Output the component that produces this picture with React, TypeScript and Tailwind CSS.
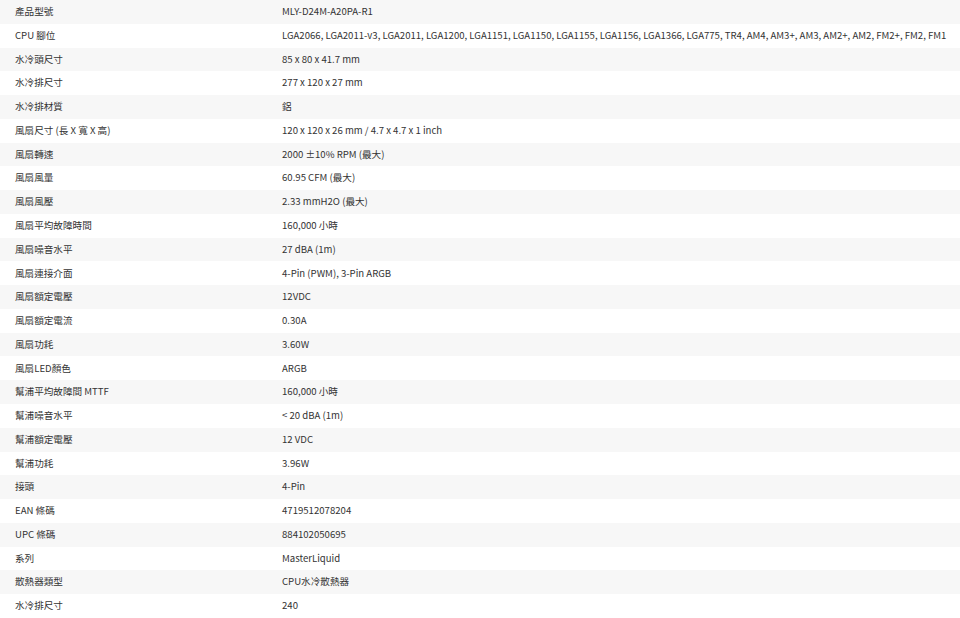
import React from "react";

const rows: [string, string][] = [
  ["產品型號", "MLY-D24M-A20PA-R1"],
  ["CPU 腳位", "LGA2066, LGA2011-v3, LGA2011, LGA1200, LGA1151, LGA1150, LGA1155, LGA1156, LGA1366, LGA775, TR4, AM4, AM3+, AM3, AM2+, AM2, FM2+, FM2, FM1"],
  ["水冷頭尺寸", "85 x 80 x 41.7 mm"],
  ["水冷排尺寸", "277 x 120 x 27 mm"],
  ["水冷排材質", "鋁"],
  ["風扇尺寸 (長 X 寬 X 高)", "120 x 120 x 26 mm / 4.7 x 4.7 x 1 inch"],
  ["風扇轉速", "2000 ±10% RPM (最大)"],
  ["風扇風量", "60.95 CFM (最大)"],
  ["風扇風壓", "2.33 mmH2O (最大)"],
  ["風扇平均故障時間", "160,000 小時"],
  ["風扇噪音水平", "27 dBA (1m)"],
  ["風扇連接介面", "4-Pin (PWM), 3-Pin ARGB"],
  ["風扇額定電壓", "12VDC"],
  ["風扇額定電流", "0.30A"],
  ["風扇功耗", "3.60W"],
  ["風扇LED顏色", "ARGB"],
  ["幫浦平均故障間 MTTF", "160,000 小時"],
  ["幫浦噪音水平", "< 20 dBA (1m)"],
  ["幫浦額定電壓", "12 VDC"],
  ["幫浦功耗", "3.96W"],
  ["接頭", "4-Pin"],
  ["EAN 條碼", "4719512078204"],
  ["UPC 條碼", "884102050695"],
  ["系列", "MasterLiquid"],
  ["散熱器類型", "CPU水冷散熱器"],
  ["水冷排尺寸", "240"],
];

export default function App() {
  return (
    <div
      className="w-[960px] h-[618px] overflow-hidden bg-white text-[#333] text-[9.6px] leading-none"
      style={{ fontFamily: '"Noto Sans CJK TC", "Noto Sans", sans-serif' }}
    >
      {rows.map(([k, v], i) => (
        <div
          key={i}
          className={`flex items-center h-[23.77px] ${i % 2 === 0 ? "bg-[#f7f7f7]" : "bg-white"}`}
        >
          <div className="w-[282px] shrink-0 pl-[15px] whitespace-nowrap">{k}</div>
          <div className="whitespace-nowrap">{v}</div>
        </div>
      ))}
    </div>
  );
}
